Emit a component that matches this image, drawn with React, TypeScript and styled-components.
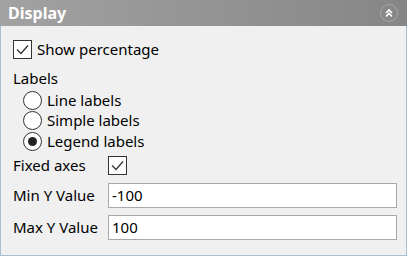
import React from "react";
import styled, { createGlobalStyle } from "styled-components";

const Global = createGlobalStyle`
  html, body { margin: 0; padding: 0; background: #ffffff; }
  * { box-sizing: border-box; }
`;

const Panel = styled.div`
  width: 407px;
  height: 256px;
  display: flex;
  flex-direction: column;
  font-family: "Noto Sans", "Open Sans", sans-serif;
  font-size: 15px;
  line-height: 19px;
  color: #000;
`;

const Header = styled.div`
  height: 26px;
  flex: none;
  display: flex;
  align-items: center;
  justify-content: space-between;
  padding: 0 9px 0 8px;
  background: linear-gradient(to right, #a2a2a2, #868686);
`;

const Title = styled.span`
  color: #fff;
  font-weight: 700;
  font-size: 16px;
`;

const CollapseBtn = styled.div`
  width: 18px;
  height: 18px;
  border-radius: 50%;
  border: 1px solid #a6a6a6;
  display: flex;
  align-items: center;
  justify-content: center;
`;

const Body = styled.div`
  flex: 1;
  background: #f0f0f0;
  border: 1px solid #a9bdd6;
  border-top: none;
  padding: 14px 9px 0 12px;
  display: flex;
  flex-direction: column;
`;

const CheckRow = styled.label`
  display: flex;
  align-items: center;
  gap: 5px;
  height: 19px;
`;

const Box = styled.span`
  width: 19px;
  height: 19px;
  border: 1px solid #333;
  background: #fff;
  display: flex;
  align-items: center;
  justify-content: center;
  flex: none;
`;

const SectionLabel = styled.div`
  margin-top: 10px;
  height: 18px;
  line-height: 18px;
`;

const RadioGroup = styled.div`
  display: flex;
  flex-direction: column;
  padding-left: 10px;
  margin-top: 3px;
  gap: 0.5px;
`;

const RadioRow = styled.div`
  display: flex;
  align-items: center;
  gap: 5px;
  height: 20px;
`;

const Radio = styled.span<{ $checked?: boolean }>`
  width: 19px;
  height: 19px;
  border-radius: 50%;
  border: 1px solid #333;
  background: #fff;
  display: flex;
  align-items: center;
  justify-content: center;
  flex: none;
  &::after {
    content: "";
    display: ${(p) => (p.$checked ? "block" : "none")};
    width: 9px;
    height: 9px;
    border-radius: 50%;
    background: #222;
  }
`;

const FieldRow = styled.div<{ $top: number }>`
  display: grid;
  grid-template-columns: 95px 1fr;
  align-items: center;
  margin-top: ${(p) => p.$top}px;
`;

const FieldLabel = styled.span``;

const Input = styled.div`
  height: 25px;
  border: 1px solid #a9a9ab;
  background: #fff;
  padding: 0 3px;
  display: flex;
  align-items: center;
`;

const Check = () => (
  <svg width="15" height="15" viewBox="0 0 15 15">
    <path d="M2 7.5 L6 11.5 L13 3.5" fill="none" stroke="#333" strokeWidth="1.3" />
  </svg>
);

export default function App() {
  return (
    <>
      <Global />
      <Panel>
        <Header>
          <Title>Display</Title>
          <CollapseBtn>
            <svg width="10" height="10" viewBox="0 0 10 10">
              <path d="M2 5 L5 2 L8 5 M2 8.5 L5 5.5 L8 8.5" fill="none" stroke="#fff" strokeWidth="1.6" />
            </svg>
          </CollapseBtn>
        </Header>
        <Body>
          <CheckRow>
            <Box><Check /></Box>
            Show percentage
          </CheckRow>
          <SectionLabel>Labels</SectionLabel>
          <RadioGroup>
            <RadioRow><Radio />Line labels</RadioRow>
            <RadioRow><Radio />Simple labels</RadioRow>
            <RadioRow><Radio $checked />Legend labels</RadioRow>
          </RadioGroup>
          <FieldRow $top={5}>
            <FieldLabel>Fixed axes</FieldLabel>
            <Box><Check /></Box>
          </FieldRow>
          <FieldRow $top={8}>
            <FieldLabel>Min Y Value</FieldLabel>
            <Input>-100</Input>
          </FieldRow>
          <FieldRow $top={7}>
            <FieldLabel>Max Y Value</FieldLabel>
            <Input>100</Input>
          </FieldRow>
        </Body>
      </Panel>
    </>
  );
}
